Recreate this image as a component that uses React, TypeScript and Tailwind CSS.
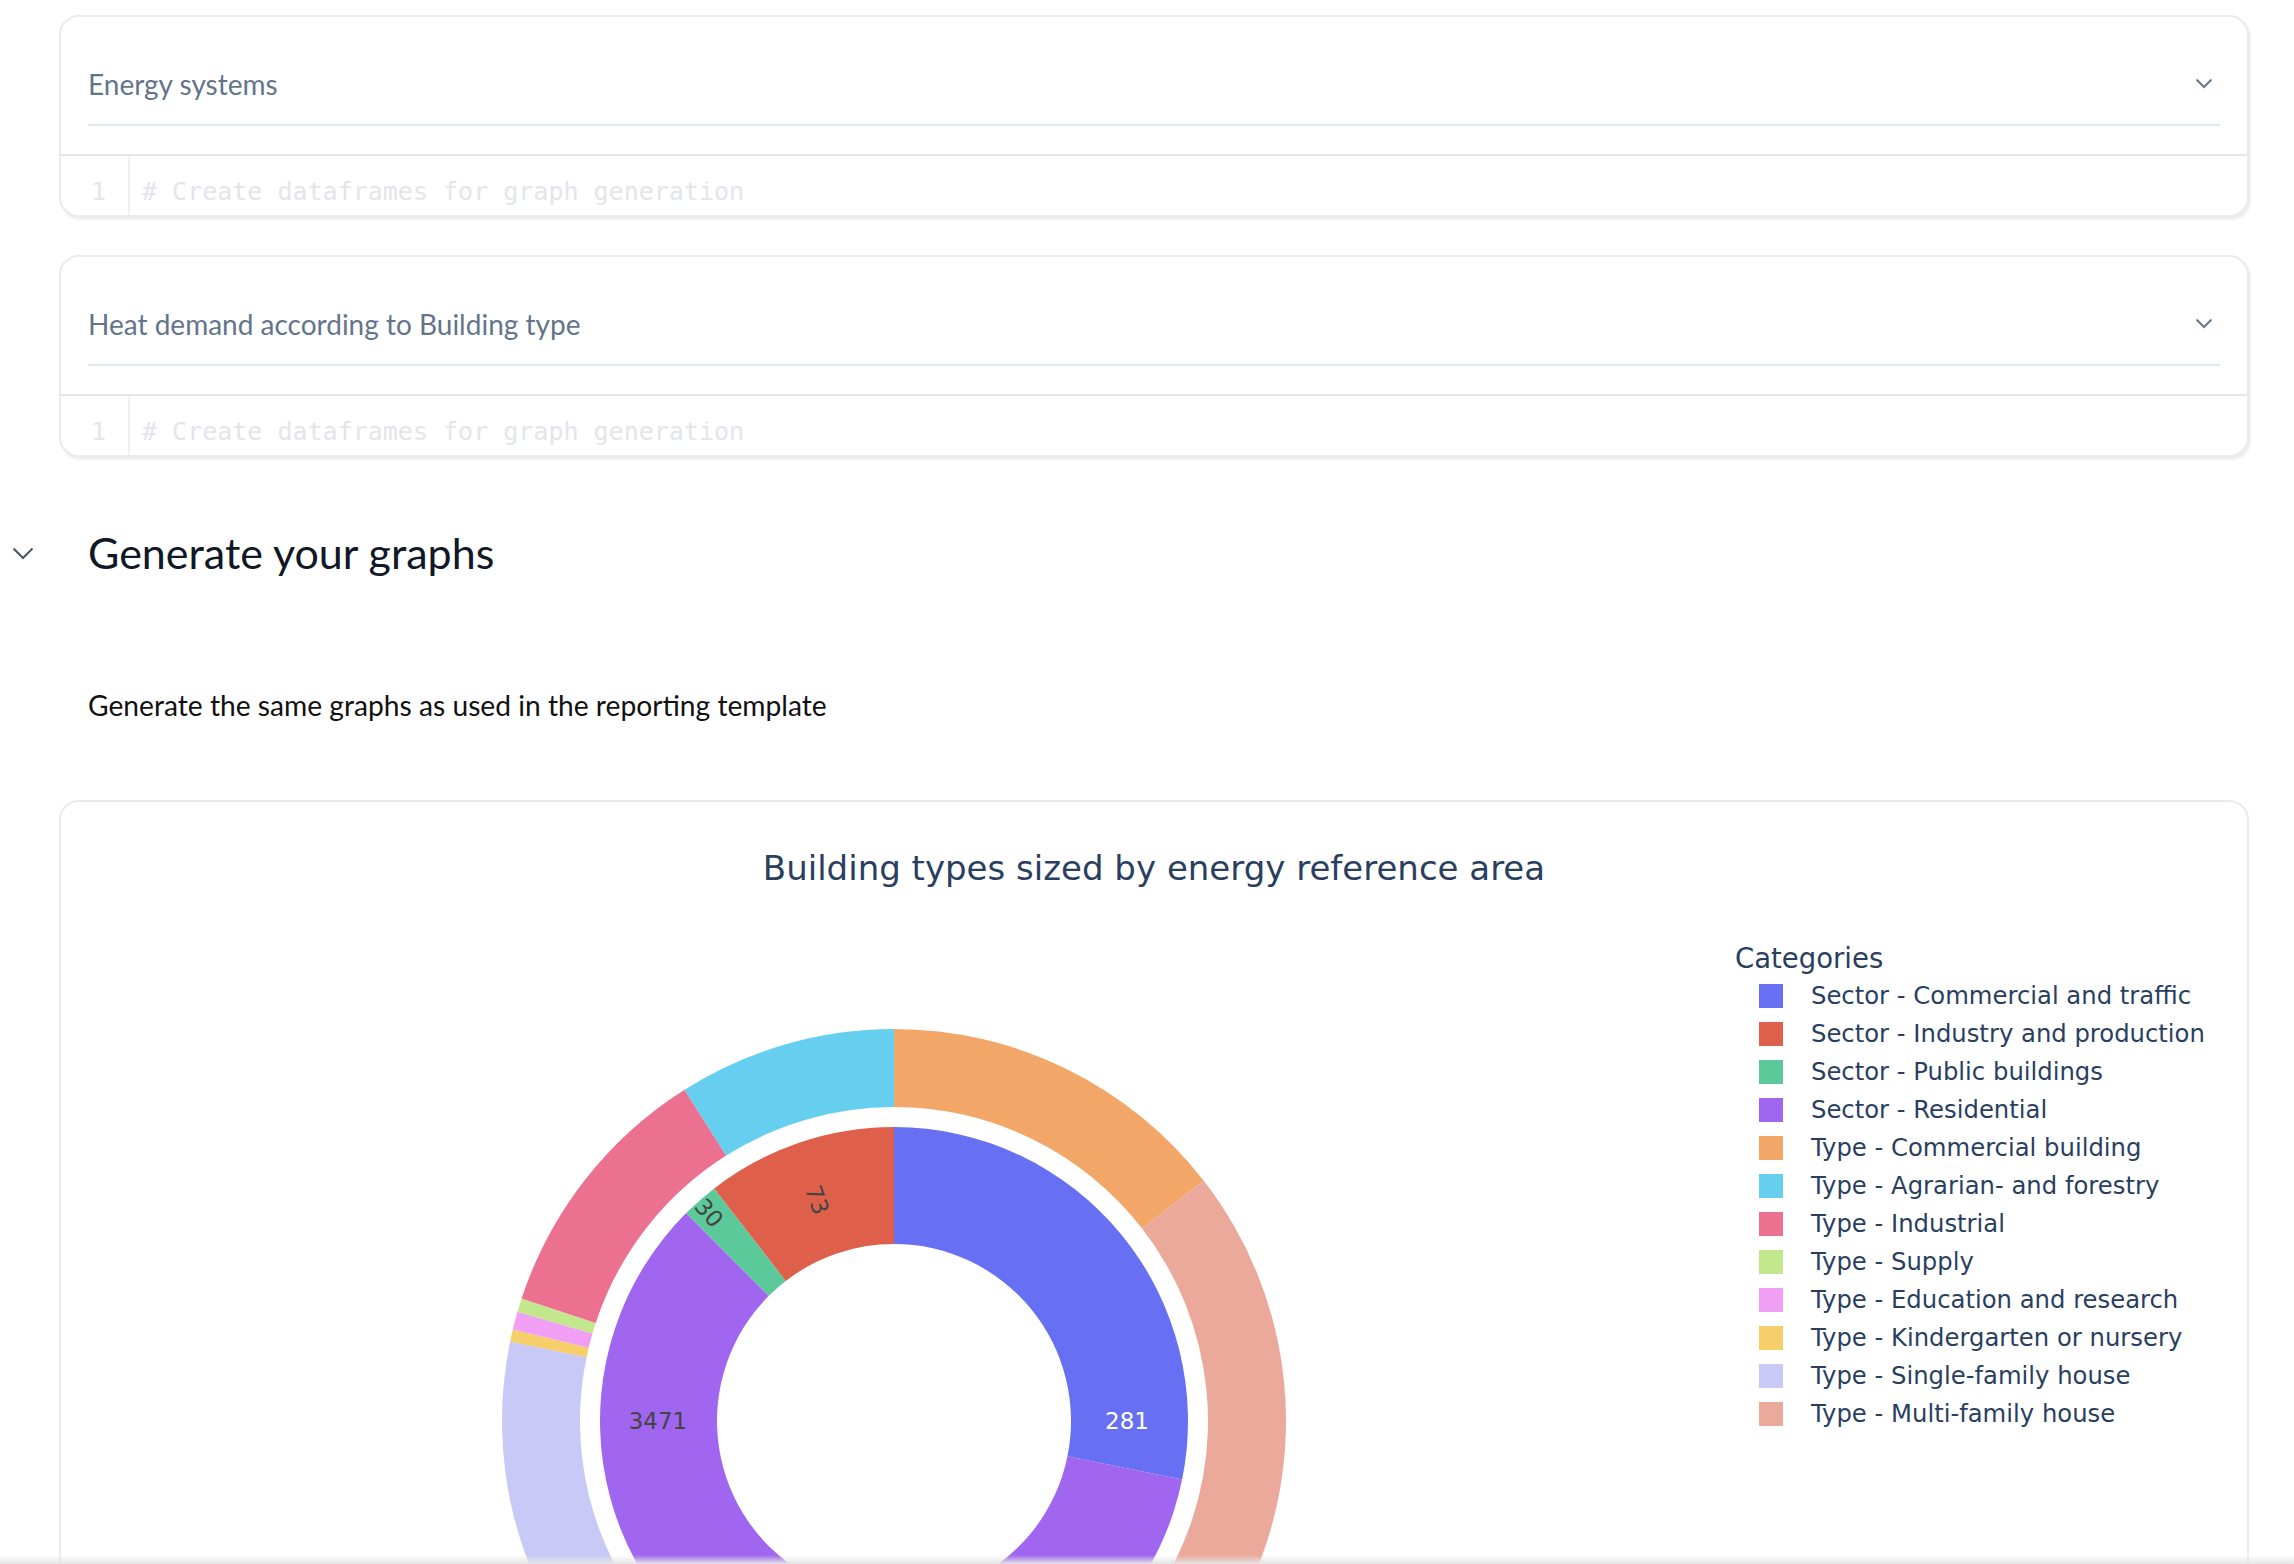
import React from "react";

const CX = 833;
const CY = 533;

type Slice = { from: number; to: number; color: string };

const inner: Slice[] = [
  { from: 0, to: 101.5, color: "#676ff2" },
  { from: 101.5, to: 315, color: "#a166f0" },
  { from: 315, to: 322.3, color: "#5cc99a" },
  { from: 322.3, to: 360, color: "#de604a" },
];

const outer: Slice[] = [
  { from: 0, to: 52.2, color: "#f2a668" },
  { from: 52.2, to: 180, color: "#eaa99b" },
  { from: 180, to: 281.7, color: "#c8c9f7" },
  { from: 281.7, to: 283.5, color: "#f6ce6a" },
  { from: 283.5, to: 286.2, color: "#f19ff5" },
  { from: 286.2, to: 288.2, color: "#c3e78d" },
  { from: 288.2, to: 327.7, color: "#ec7090" },
  { from: 327.7, to: 360, color: "#66cfef" },
];

const legend = [
  { label: "Sector - Commercial and traffic", swatch: "bg-[#676ff2]" },
  { label: "Sector - Industry and production", swatch: "bg-[#de604a]" },
  { label: "Sector - Public buildings", swatch: "bg-[#5cc99a]" },
  { label: "Sector - Residential", swatch: "bg-[#a166f0]" },
  { label: "Type - Commercial building", swatch: "bg-[#f2a668]" },
  { label: "Type - Agrarian- and forestry", swatch: "bg-[#66cfef]" },
  { label: "Type - Industrial", swatch: "bg-[#ec7090]" },
  { label: "Type - Supply", swatch: "bg-[#c3e78d]" },
  { label: "Type - Education and research", swatch: "bg-[#f19ff5]" },
  { label: "Type - Kindergarten or nursery", swatch: "bg-[#f6ce6a]" },
  { label: "Type - Single-family house", swatch: "bg-[#c8c9f7]" },
  { label: "Type - Multi-family house", swatch: "bg-[#eaa99b]" },
];

// angle in degrees, clockwise from 12 o'clock
const pt = (a: number, r: number) => {
  const rad = (a * Math.PI) / 180;
  return `${(CX + r * Math.sin(rad)).toFixed(2)} ${(CY - r * Math.cos(rad)).toFixed(2)}`;
};

const arc = (s: Slice, r0: number, r1: number) => {
  const large = s.to - s.from > 180 ? 1 : 0;
  return `M ${pt(s.from, r1)} A ${r1} ${r1} 0 ${large} 1 ${pt(s.to, r1)} L ${pt(s.to, r0)} A ${r0} ${r0} 0 ${large} 0 ${pt(s.from, r0)} Z`;
};

function Chevron({ className, w = 18 }: { className?: string; w?: number }) {
  const h = w / 2 + 2;
  return (
    <svg width={w} height={h} viewBox={`0 0 ${w} ${h}`} className={className} fill="none">
      <polyline points={`1.5,1.5 ${w / 2},${w / 2} ${w - 1.5},1.5`} stroke="currentColor" strokeWidth="2" />
    </svg>
  );
}

function CodeCell({ title }: { title: string }) {
  return (
    <div className="h-[202px] overflow-hidden rounded-[20px] border-2 border-[#ebebeb] bg-white shadow-[2px_3px_2px_rgba(0,0,0,0.07)]">
      <div className="px-[27px]">
        <div className="flex h-[109px] items-center justify-between border-b-2 border-[#e2e8f0] pt-[26px] pr-[7px]">
          <span className="font-['Lato'] text-[28px] leading-[36px] text-[#64748b]">{title}</span>
          <Chevron className="text-[#64748b]" />
        </div>
      </div>
      <div className="mt-[28px] flex border-t-2 border-[#e5e5e5] font-['DejaVu_Sans_Mono',monospace] text-[25px] leading-[33px] text-[#e3e5e9]">
        <div className="w-[67px] pt-[19px] pr-[22px] text-right">
          <div>1</div>
          <div>2</div>
        </div>
        <div className="border-l-2 border-[#f0f1f3] pt-[19px] pl-[12px]">
          <div># Create dataframes for graph generation</div>
        </div>
      </div>
    </div>
  );
}

export default function App() {
  return (
    <div className="min-h-screen bg-white pb-[200px]">
      <div className="pt-[15px] pr-[45px] pl-[59px]">
        <div className="flex flex-col gap-[38px]">
          <CodeCell title="Energy systems" />
          <CodeCell title="Heat demand according to Building type" />
        </div>
      </div>

      <div className="relative mt-[72px] flex items-center">
        <Chevron w={22} className="absolute left-[12px] text-[#4b5563]" />
        <h2 className="pl-[88px] font-['Lato'] text-[43px] leading-[48px] text-[#111827]">
          Generate your graphs
        </h2>
      </div>

      <p className="mt-[110px] pl-[88px] font-['Lato'] text-[28.2px] leading-[36px] text-[#111111]">
        Generate the same graphs as used in the reporting template
      </p>

      <div className="mt-[77px] pr-[45px] pl-[59px]">
        <div className="h-[1100px] overflow-hidden rounded-t-[20px] border-2 border-[#ebebeb] bg-white">
          <div className="pt-[46px] text-center font-['DejaVu_Sans',Verdana,sans-serif] text-[34px] leading-[40px] text-[#2a3f5f]">
            Building types sized by energy reference area
          </div>
          <div className="flex">
            <svg width="1640" height="960" viewBox="0 0 1640 960" className="shrink-0">
              {outer.map((s, i) => (
                <path key={`o${i}`} d={arc(s, 314, 392)} fill={s.color} />
              ))}
              {inner.map((s, i) => (
                <path key={`i${i}`} d={arc(s, 177, 294)} fill={s.color} />
              ))}
              <g fontFamily="'DejaVu Sans', Verdana, sans-serif" fontSize="23" textAnchor="middle" dominantBaseline="central">
                <text x="1066" y="533" fill="#ffffff">281</text>
                <text x="597" y="533" fill="#444444">3471</text>
                <text x="756" y="312" fill="#444444" transform="rotate(71 756 312)">73</text>
                <text x="648" y="325" fill="#444444" transform="rotate(48.6 648 325)">30</text>
              </g>
            </svg>
            <div className="mt-[51px] ml-[34px] font-['DejaVu_Sans',Verdana,sans-serif] text-[#2a3f5f]">
              <div className="text-[27.5px] leading-[38px]">Categories</div>
              {legend.map((item) => (
                <div key={item.label} className="flex h-[38px] items-center pl-[24px]">
                  <span className={`h-[24px] w-[24px] ${item.swatch}`} />
                  <span className="ml-[28px] text-[24.3px] leading-[38px]">{item.label}</span>
                </div>
              ))}
            </div>
          </div>
        </div>
      </div>

      <div className="fixed inset-x-0 bottom-0 h-[9px] bg-gradient-to-b from-transparent to-[#e4e4e4]" />
    </div>
  );
}
